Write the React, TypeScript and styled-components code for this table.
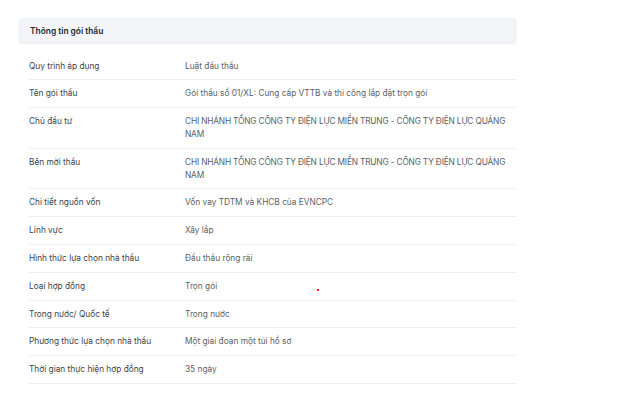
import React from "react";
import styled, { createGlobalStyle } from "styled-components";

const Global = createGlobalStyle`
  html, body { margin: 0; padding: 0; background: #ffffff; }
  body { font-family: Inter, "Noto Sans", sans-serif; -webkit-font-smoothing: antialiased; }
`;

const Page = styled.div`
  position: relative;
  width: 640px;
  height: 402px;
  padding: 18px 0 0 19px;
  box-sizing: border-box;
`;

const Section = styled.section`
  width: 497px;
`;

const Header = styled.div`
  height: 25px;
  display: flex;
  align-items: center;
  padding: 0 10px;
  box-sizing: border-box;
  background: #f3f5f8;
  border: 1px solid #eceff3;
  border-radius: 4px;
  box-shadow: 0 1px 2px rgba(30, 40, 60, 0.08);
`;

const Title = styled.h2`
  margin: 0;
  font-size: 8.4px;
  font-weight: 600;
  color: #222831;
`;

const Table = styled.div`
  margin: 9.6px 0 0 10px;
`;

const Row = styled.div`
  display: grid;
  grid-template-columns: 156px 1fr;
  padding: 7px 0;
  border-bottom: 1px solid #eeeff2;
  font-size: 8.3px;
  line-height: 12.8px;
`;

const Label = styled.div`
  color: #3a3f47;
`;

const Value = styled.div<{ $caps?: boolean }>`
  color: #5a5f67;
  letter-spacing: ${(p) => (p.$caps ? "-0.16px" : "0")};
`;

const Dot = styled.span`
  position: absolute;
  left: 317px;
  top: 289px;
  width: 2px;
  height: 2px;
  background: #e8202a;
`;

const rows: [string, string][] = [
  ["Quy trình áp dụng", "Luật đấu thầu"],
  ["Tên gói thầu", "Gói thầu số 01/XL: Cung cấp VTTB và thi công lắp đặt trọn gói"],
  ["Chủ đầu tư", "CHI NHÁNH TỔNG CÔNG TY ĐIỆN LỰC MIỀN TRUNG - CÔNG TY ĐIỆN LỰC QUẢNG NAM"],
  ["Bên mời thầu", "CHI NHÁNH TỔNG CÔNG TY ĐIỆN LỰC MIỀN TRUNG - CÔNG TY ĐIỆN LỰC QUẢNG NAM"],
  ["Chi tiết nguồn vốn", "Vốn vay TDTM và KHCB của EVNCPC"],
  ["Lĩnh vực", "Xây lắp"],
  ["Hình thức lựa chọn nhà thầu", "Đấu thầu rộng rãi"],
  ["Loại hợp đồng", "Trọn gói"],
  ["Trong nước/ Quốc tế", "Trong nước"],
  ["Phương thức lựa chọn nhà thầu", "Một giai đoạn một túi hồ sơ"],
  ["Thời gian thực hiện hợp đồng", "35 ngày"],
];

export default function App() {
  return (
    <>
      <Global />
      <Page>
        <Section>
          <Header>
            <Title>Thông tin gói thầu</Title>
          </Header>
          <Table>
            {rows.map(([l, v]) => (
              <Row key={l}>
                <Label>{l}</Label>
                <Value $caps={v === v.toUpperCase()}>{v}</Value>
              </Row>
            ))}
          </Table>
        </Section>
        <Dot />
      </Page>
    </>
  );
}
